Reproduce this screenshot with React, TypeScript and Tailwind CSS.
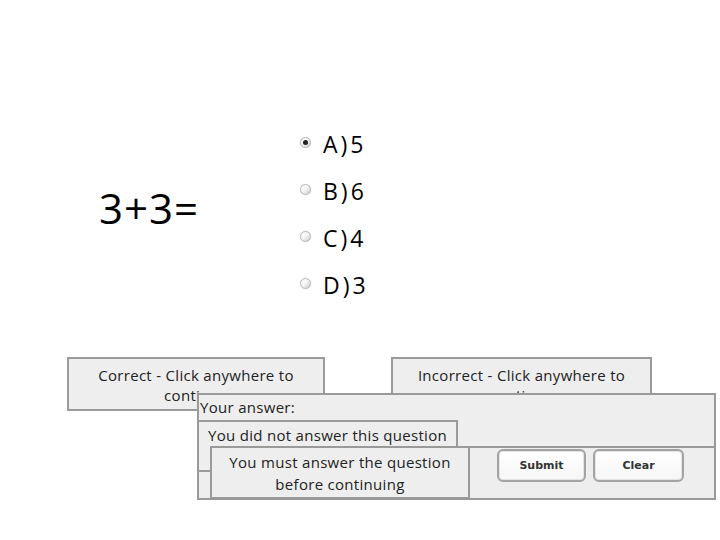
const OPTIONS = [
  { label: 'A)5', checked: true },
  { label: 'B)6', checked: false },
  { label: 'C)4', checked: false },
  { label: 'D)3', checked: false },
]

function Radio({ checked }: { checked: boolean }) {
  return (
    <span className="-mt-1 flex h-[11px] w-[11px] items-center justify-center rounded-full border border-[#b5b5b5] bg-gradient-to-br from-white via-[#f4f4f4] to-[#c9c9c9] shadow-[0_0_1px_#ccc]">
      {checked && <span className="h-[5px] w-[5px] rounded-full bg-[#222]" />}
    </span>
  )
}

function Button({ label, width }: { label: string; width: string }) {
  return (
    <button
      className={`flex h-[33px] ${width} items-center justify-center rounded-[6px] border-2 border-[#a3a3a3] bg-gradient-to-b from-white to-[#f6f6f6] font-['DejaVu_Sans',sans-serif] text-[11px] font-bold text-[#333] shadow-[inset_0_0_0_1px_#e4e4e4]`}
    >
      {label}
    </button>
  )
}

export default function App() {
  return (
    <div className="relative h-[540px] w-[720px] overflow-hidden bg-white font-['Open_Sans',sans-serif] text-[#1a1a1a]">
      {/* question */}
      <div className="flex pt-[121px]">
        <div className="flex w-[300px] items-center pb-[14px] pl-[99px]">
          <span className="text-[42px] leading-none tracking-[1px] text-black">3+3=</span>
        </div>
        <div className="flex flex-col">
          {OPTIONS.map(({ label, checked }) => (
            <div key={label} className="flex h-[47px] items-center gap-[12px]">
              <Radio checked={checked} />
              <span className="text-[23px] leading-none tracking-[3px] text-black">{label}</span>
            </div>
          ))}
        </div>
      </div>

      {/* feedback boxes */}
      <div className="mt-[48px] flex gap-[66px] pl-[67px] text-[15px] leading-[20px] tracking-[0.3px] text-[#222]">
        <div className="h-[54px] w-[258px] border-2 border-[#9a9a9a] bg-[#eeeeee] px-2 pt-[6px] text-center">
          Correct - Click anywhere to continue
        </div>
        <div className="h-[54px] w-[261px] border-2 border-[#9a9a9a] bg-[#eeeeee] px-2 pt-[6px] text-center">
          Incorrect - Click anywhere to continue
        </div>
      </div>

      {/* review panel, drawn over the feedback */}
      <div className="absolute left-[197px] top-[393px] flex h-[107px] w-[519px] flex-col border-2 border-[#9a9a9a] bg-[#eeeeee] text-[15px] leading-[20px] tracking-[0.3px] text-[#222]">
        <div className="h-[51px] pl-[1px] pt-[2px]">Your answer:</div>
        <div className="flex flex-1 justify-end gap-[7px] border-t-2 border-[#9a9a9a] pr-[30px] pt-[1px] tracking-normal">
          <Button label="Submit" width="w-[89px]" />
          <Button label="Clear" width="w-[91px]" />
        </div>
      </div>

      <div className="absolute left-[197px] top-[420px] h-[52px] w-[261px] border-2 border-[#9a9a9a] bg-[#eeeeee] pt-[3px] text-center text-[15px] leading-[20px] tracking-[0.3px] text-[#222]">
        You did not answer this question
      </div>

      <div className="absolute left-[210px] top-[446px] h-[53px] w-[260px] border-2 border-[#9a9a9a] bg-[#eeeeee] pt-[3px] text-center text-[15px] leading-[22px] tracking-[0.3px] text-[#222]">
        You must answer the question
        <br />
        before continuing
      </div>
    </div>
  )
}
